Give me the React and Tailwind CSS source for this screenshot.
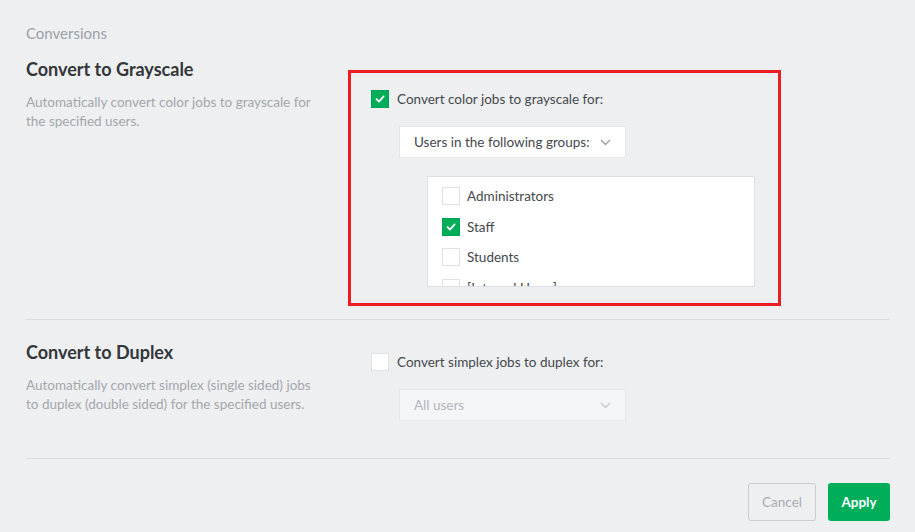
import React from "react";

const font = { fontFamily: "Lato, 'Open Sans', sans-serif" };

function Check({ checked, size = "w-[18px] h-[18px]" }) {
  return (
    <span
      className={`flex items-center justify-center shrink-0 ${size} ${
        checked ? "bg-[#00ae5a] border border-[#00a354]" : "bg-white border border-[#dfe2e6]"
      }`}
    >
      {checked && (
        <svg width="12" height="12" viewBox="0 0 12 12" fill="none">
          <path d="M2.5 6.2 L5 8.6 L9.6 3.4" stroke="white" strokeWidth="1.8" strokeLinecap="round" strokeLinejoin="round" />
        </svg>
      )}
    </span>
  );
}

function Chevron({ color }) {
  return (
    <svg width="11" height="7" viewBox="0 0 11 7" fill="none">
      <path d="M1 1 L5.5 5.5 L10 1" stroke={color} strokeWidth="1.4" />
    </svg>
  );
}

export default function App() {
  const groups = [
    { name: "Administrators", checked: false },
    { name: "Staff", checked: true },
    { name: "Students", checked: false },
    { name: "[Internal Users]", checked: false },
  ];

  return (
    <div className="w-[915px] h-[532px] bg-[#eeeff1] overflow-hidden" style={font}>
      <div className="pl-[26px] pr-[25px] pt-[24px]">
        <div className="text-[15px] text-[#9ba1a8] leading-[18px]">Conversions</div>

        {/* Grayscale */}
        <div className="flex mt-[15px]">
          <div className="w-[322px] shrink-0">
            <h2 className="text-[18px] font-bold text-[#333639] leading-[24px]">Convert to Grayscale</h2>
            <p className="mt-[12px] text-[13.5px] leading-[19px] text-[#a3a7ac] w-[290px]">
              Automatically convert color jobs to grayscale for the specified users.
            </p>
          </div>
          <div className="mt-[13px] w-[433px] h-[236px] border-[3px] border-[#ec1c24] pl-[20px] pt-[16px]">
            <label className="flex items-center gap-[8px]">
              <Check checked />
              <span className="text-[13.5px] text-[#44484c]">Convert color jobs to grayscale for:</span>
            </label>
            <div className="ml-[28px] mt-[17px] w-[227px] h-[32px] bg-white border border-[#e3e6ea] flex items-center justify-between pl-[14px] pr-[14px]">
              <span className="text-[13.5px] text-[#44484c]">Users in the following groups:</span>
              <Chevron color="#9aa0a6" />
            </div>
            <div className="ml-[56px] mt-[18px] w-[328px] h-[111px] bg-white border border-[#dde0e4] overflow-hidden pl-[14px] pt-[10px]">
              {groups.map((g) => (
                <div key={g.name} className="flex items-center gap-[7px] h-[18px] mb-[12.5px]">
                  <Check checked={g.checked} />
                  <span className="text-[13.5px] text-[#44484c]">{g.name}</span>
                </div>
              ))}
            </div>
          </div>
        </div>

        <div className="mt-[13px] h-px bg-[#d9dce0]" />

        {/* Duplex */}
        <div className="flex mt-[20px]">
          <div className="w-[345px] shrink-0">
            <h2 className="text-[18px] font-bold text-[#333639] leading-[24px]">Convert to Duplex</h2>
            <p className="mt-[12px] text-[13.5px] leading-[19px] text-[#a3a7ac] w-[300px]">
              Automatically convert simplex (single sided) jobs to duplex (double sided) for the specified users.
            </p>
          </div>
          <div className="pt-[12px]">
            <label className="flex items-center gap-[8px]">
              <Check checked={false} />
              <span className="text-[13.5px] text-[#44484c]">Convert simplex jobs to duplex for:</span>
            </label>
            <div className="ml-[28px] mt-[17px] w-[227px] h-[32px] bg-[#f4f5f7] border border-[#e6e8eb] flex items-center justify-between pl-[14px] pr-[14px]">
              <span className="text-[13.5px] text-[#b3b7bc]">All users</span>
              <Chevron color="#c4c8cc" />
            </div>
          </div>
        </div>

        <div className="mt-[37px] h-px bg-[#d9dce0]" />

        <div className="flex justify-end gap-[12px] mt-[24px]">
          <button className="w-[68px] h-[38px] rounded-[3px] border border-[#c9cdd2] text-[13.5px] text-[#a8adb2]">
            Cancel
          </button>
          <button className="w-[62px] h-[38px] rounded-[3px] bg-[#00ae5a] text-[13.5px] font-bold text-white">
            Apply
          </button>
        </div>
      </div>
    </div>
  );
}
